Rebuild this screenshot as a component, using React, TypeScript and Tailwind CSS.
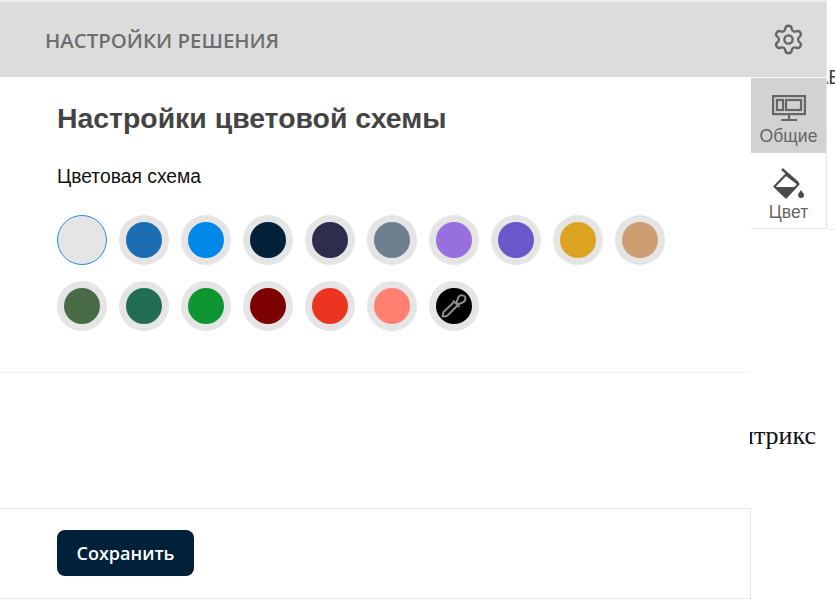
import React from 'react';
import { Settings } from 'lucide-react';

const COLORS = [
  ['#e5e5e5', '#1b6eb2', '#0088e8', '#012039', '#2d2e4d', '#6e7f90', '#9670dc', '#6a57c9', '#dca320', '#cd9e72'],
  ['#4a6b47', '#216e55', '#0d9631', '#7d0000', '#ec3520', '#ff8070'],
];

function MonitorIcon() {
  return (
    <svg width="34" height="26" viewBox="0 0 34 26" fill="none" stroke="#666666" strokeWidth="2.2">
      <rect x="1.1" y="1.1" width="31.8" height="18" />
      <rect x="5" y="5" width="6" height="10" />
      <rect x="14" y="5" width="15" height="10" />
      <path d="M17 19v5M9 25h16" />
    </svg>
  );
}

function BucketIcon() {
  return (
    <svg width="34" height="32" viewBox="0 0 34 32">
      <path d="M10 2 L26 16" stroke="#4a4a4a" strokeWidth="2.4" fill="none" />
      <path d="M14 7.5 L2.5 19.5 L14 30.5 L26.5 17 Z" fill="#ffffff" stroke="#4a4a4a" strokeWidth="2.2" strokeLinejoin="round" />
      <path d="M3 20 H25 L14 30.5 Z" fill="#4a4a4a" />
      <path d="M29 23 C30 25 32 26.5 32 28 A3 3 0 0 1 26 28 C26 26.5 28 25 29 23 Z" fill="#4a4a4a" />
    </svg>
  );
}

function DropperIcon() {
  return (
    <svg width="28" height="28" viewBox="0 0 28 28" fill="none" stroke="#8c8c8c" strokeWidth="2" strokeLinejoin="round">
      <path d="M14.5 9.5 L3.5 20 L2.5 24.5 L7 24 L18 13" />
      <path d="M13 8.5 L19.5 15" />
      <path d="M16.5 10 L18.5 5 C20 2.5 24 3 25 5 C26 7.5 24.5 9.5 22.5 10.5 L18 12.5 Z" />
    </svg>
  );
}

function Swatch({ color, active }: { color: string; active?: boolean }) {
  return (
    <div className={`w-[50px] h-[50px] rounded-full bg-[#e5e5e5] flex items-center justify-center ${active ? 'border border-[#1b8fe8]' : ''}`}>
      {!active && <div className="w-9 h-9 rounded-full" style={{ backgroundColor: color }} />}
    </div>
  );
}

export default function App() {
  return (
    <div className="relative w-[835px] h-[606px] overflow-hidden bg-white">
      {/* page behind the panel */}
      <div className="absolute left-[815px] top-[65px] whitespace-nowrap text-[20px] leading-[24px] text-[#444444] font-['Liberation_Sans',sans-serif]">АБ</div>
      <div className="absolute left-[827px] top-[229px] w-2 h-px bg-[#eeeeee]" />
      <div className="absolute left-[600px] top-[421px] w-[216px] text-right text-[26px] leading-[30px] text-[#111111] font-['Liberation_Serif',serif]">Битрикс</div>

      <div className="relative flex items-start">
        <div className="w-[751px] h-[599px] flex flex-col">
          <div className="h-[2px] bg-[#eeeeee]" />
          <div className="h-[75px] bg-[#dcdcdc] flex items-center pl-[45px] pt-[1px]">
            <span className="text-[20.4px] font-semibold text-[#6e6e6e] font-['Open_Sans',sans-serif]">НАСТРОЙКИ РЕШЕНИЯ</span>
          </div>
          <div className="bg-white pl-[57px] h-[295px]">
            <h2 className="mt-[24px] text-[28.4px] leading-[34px] font-bold text-[#444444] font-['Liberation_Sans',sans-serif]">Настройки цветовой схемы</h2>
            <p className="mt-[30px] text-[19.3px] leading-[24px] text-[#111111] font-['Liberation_Sans',sans-serif]">Цветовая схема</p>
            <div className="mt-[26px] flex flex-col gap-4">
              <div className="flex gap-3">
                {COLORS[0].map((c, i) => <Swatch key={c} color={c} active={i === 0} />)}
              </div>
              <div className="flex gap-3">
                {COLORS[1].map((c) => <Swatch key={c} color={c} />)}
                <div className="w-[50px] h-[50px] rounded-full bg-[#e5e5e5] flex items-center justify-center">
                  <div className="w-9 h-9 rounded-full bg-black flex items-center justify-center">
                    <DropperIcon />
                  </div>
                </div>
              </div>
            </div>
          </div>
          <div className="h-[136px] border-t border-[#f0f0f0] mr-px bg-white" />
          <div className="h-[91px] border-t border-b border-r border-[#e6e6e6] bg-white pl-[57px] pt-[21px]">
            <button className="w-[137px] h-[46px] rounded-lg bg-[#012039] text-white text-[18px] font-semibold font-['Open_Sans',sans-serif]">Сохранить</button>
          </div>
        </div>

        <div className="w-[76px] flex flex-col bg-white border-r border-b border-[#e6e6e6]">
          <div className="h-[2px] bg-[#eeeeee]" />
          <div className="h-[75px] bg-[#dcdcdc] flex items-center justify-center">
            <Settings size={33} strokeWidth={1.75} color="#666666" />
          </div>
          <div className="h-px bg-white" />
          <div className="h-[75px] bg-[#d2d2d2] flex flex-col items-center pt-[17px]">
            <MonitorIcon />
            <span className="text-[17.6px] leading-[20px] mt-[5px] text-[#666666] font-['Liberation_Sans',sans-serif]">Общие</span>
          </div>
          <div className="h-[75px] bg-white flex flex-col items-center pt-[14px]">
            <BucketIcon />
            <span className="text-[17.6px] leading-[20px] mt-[3px] text-[#666666] font-['Liberation_Sans',sans-serif]">Цвет</span>
          </div>
        </div>
      </div>
    </div>
  );
}
